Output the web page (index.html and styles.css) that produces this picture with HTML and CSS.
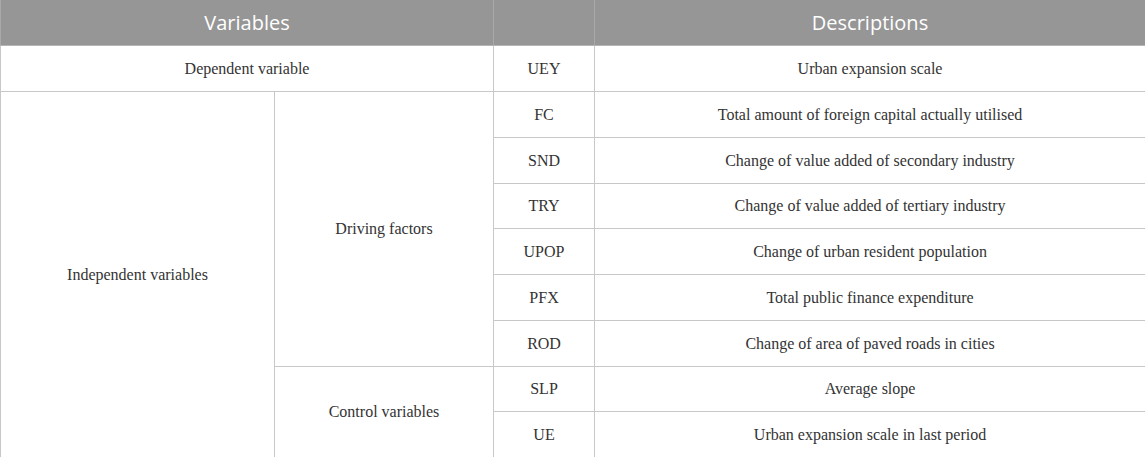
FILE: index.html
```html
<!DOCTYPE html>
<html lang="en">
<head>
<meta charset="utf-8">
<title>Variables</title>
<link rel="stylesheet" href="styles.css">
</head>
<body>
<table class="vars">
  <colgroup>
    <col class="c1"><col class="c2"><col class="c3"><col class="c4">
  </colgroup>
  <thead>
    <tr class="head">
      <th colspan="2">Variables</th>
      <th></th>
      <th>Descriptions</th>
    </tr>
  </thead>
  <tbody>
    <tr><td colspan="2">Dependent variable</td><td>UEY</td><td>Urban expansion scale</td></tr>
    <tr><td rowspan="8">Independent variables</td><td rowspan="6">Driving factors</td><td>FC</td><td>Total amount of foreign capital actually utilised</td></tr>
    <tr><td>SND</td><td>Change of value added of secondary industry</td></tr>
    <tr class="short"><td>TRY</td><td>Change of value added of tertiary industry</td></tr>
    <tr><td>UPOP</td><td>Change of urban resident population</td></tr>
    <tr><td>PFX</td><td>Total public finance expenditure</td></tr>
    <tr><td>ROD</td><td>Change of area of paved roads in cities</td></tr>
    <tr class="short"><td rowspan="2">Control variables</td><td>SLP</td><td>Average slope</td></tr>
    <tr><td>UE</td><td>Urban expansion scale in last period</td></tr>
  </tbody>
</table>
</body>
</html>
```
FILE: styles.css
```css
html, body {
  margin: 0;
  padding: 0;
  background: #ffffff;
}
.vars {
  width: 1145px;
  table-layout: fixed;
  border-collapse: collapse;
  font-family: "Liberation Serif", "DejaVu Serif", serif;
  font-size: 16px;
  color: #333333;
}
.c1 { width: 274px; }
.c2 { width: 219px; }
.c3 { width: 101px; }
.c4 { width: 551px; }
.vars th {
  background: #969696;
  color: #ffffff;
  font-family: "Open Sans", "Noto Sans", sans-serif;
  font-weight: 400;
  font-size: 20px;
  height: 45px;
  padding: 0;
  border-left: 1px solid #a9a9a9;
  border-right: 1px solid #a9a9a9;
  border-bottom: 1px solid #b5b5b5;
  text-align: center;
  vertical-align: middle;
}
.vars td {
  height: 45px;
  padding: 0;
  text-align: center;
  vertical-align: middle;
  border: 1px solid #c8c8c8;
}
.vars tr.short td {
  height: 44px;
}
```
